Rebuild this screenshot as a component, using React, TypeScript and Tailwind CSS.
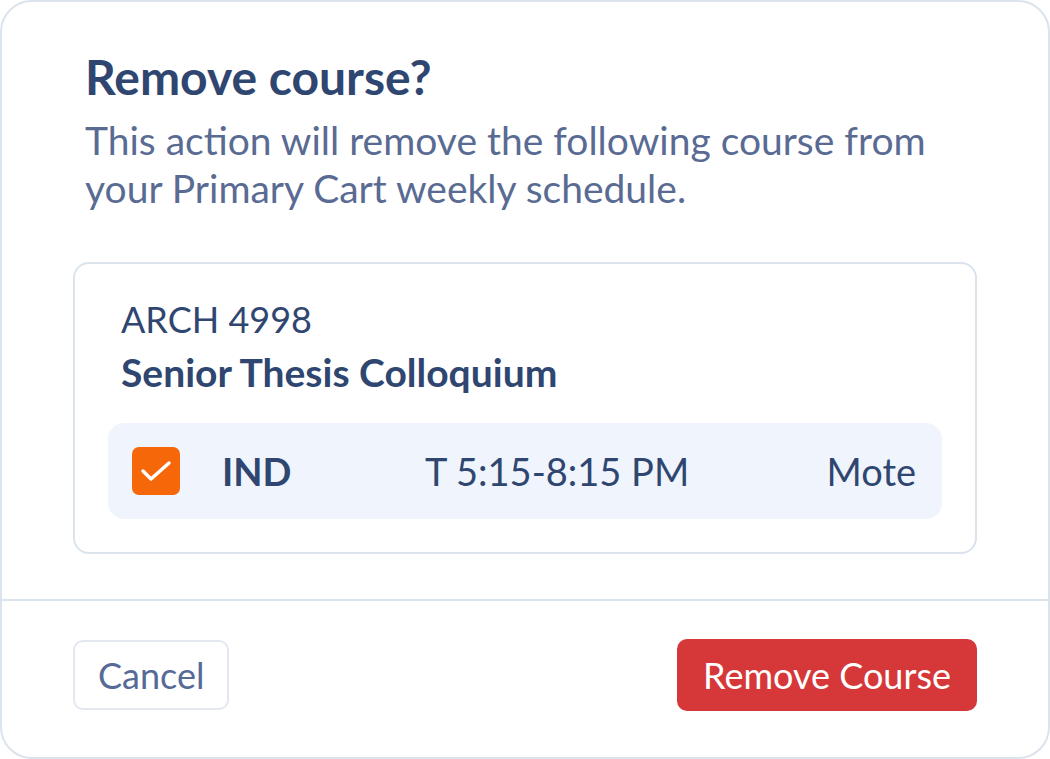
export default function App() {
  return (
    <div className="w-[1050px] h-[759px] bg-white font-['Lato',sans-serif]">
      <div className="w-full h-full border-2 border-[#dbe3ec] rounded-[32px] flex flex-col overflow-hidden">
        {/* Body */}
        <div className="px-[71px] pt-[47px] pb-[45px]">
          <h1 className="px-3 text-[48px] leading-[56px] font-bold text-[#2f4670]">Remove course?</h1>
          <p className="px-3 mt-[11px] text-[39px] leading-[48px] text-[#5a6b93]">
            This action will remove the following course from your Primary Cart weekly schedule.
          </p>

          {/* Course card */}
          <div className="mt-[50px] border-2 border-[#dbe3ec] rounded-[16px] px-[33px] pt-[33px] pb-[33px]">
            <div className="px-[13px] text-[36px] leading-[44px] text-[#2f4670]">ARCH 4998</div>
            <div className="px-[13px] mt-[7px] text-[39px] leading-[48px] font-bold text-[#2f4670]">
              Senior Thesis Colloquium
            </div>
            <div className="mt-[27px] h-[96px] bg-[#f0f4fc] rounded-[16px] flex items-center pl-[24px] pr-[26px] text-[38px] text-[#2f4670]">
              <div className="w-12 h-12 rounded-[7px] bg-[#f56708] shrink-0">
                <svg viewBox="0 0 48 48" className="w-12 h-12">
                  <polyline
                    points="11,24 19,32 37,16"
                    fill="none"
                    stroke="white"
                    strokeWidth="3.5"
                    strokeLinecap="round"
                    strokeLinejoin="round"
                  />
                </svg>
              </div>
              <span className="ml-[42px] w-[203px] font-bold">IND</span>
              <span className="flex-1">T 5:15-8:15 PM</span>
              <span>Mote</span>
            </div>
          </div>
        </div>

        {/* Footer */}
        <div className="flex-1 border-t-2 border-[#dbe3ec] flex items-center justify-between px-[71px] pb-[9px]">
          <button className="h-[70px] px-[23px] border-2 border-[#e3e8f0] rounded-[10px] text-[36px] text-[#566a98]">
            Cancel
          </button>
          <button className="h-[72px] px-[26px] bg-[#d6383a] rounded-[10px] text-[36px] text-white">
            Remove Course
          </button>
        </div>
      </div>
    </div>
  );
}
